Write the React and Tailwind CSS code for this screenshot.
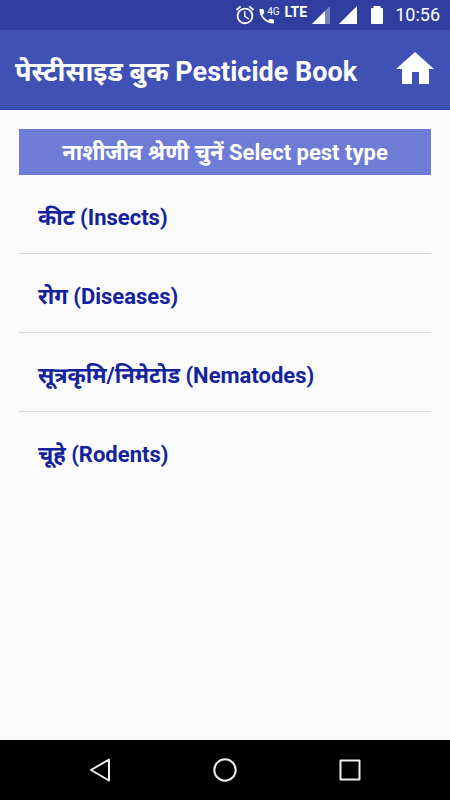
import React from "react";

const pests = [
  { id: "insects", label: "कीट (Insects)" },
  { id: "diseases", label: "रोग (Diseases)" },
  { id: "nematodes", label: "सूत्रकृमि/निमेटोड (Nematodes)" },
  { id: "rodents", label: "चूहे (Rodents)" },
];

const AlarmIcon = () => (
  <svg
    className="w-[22px] h-[22px]"
    viewBox="0 0 24 24"
    fill="white"
    aria-hidden="true"
  >
    <path d="M22 5.72l-4.6-3.86-1.29 1.53 4.6 3.86L22 5.72zM7.88 3.39L6.6 1.86 2 5.71l1.29 1.53 4.59-3.85zM12.5 8H11v6l4.75 2.85.75-1.23-4-2.37V8zM12 4c-4.97 0-9 4.03-9 9s4.02 9 9 9a9 9 0 0 0 0-18zm0 16c-3.87 0-7-3.13-7-7s3.13-7 7-7 7 3.13 7 7-3.13 7-7 7z" />
  </svg>
);

const PhoneIcon = () => (
  <svg
    className="w-4 h-4 mt-2"
    viewBox="0 0 16 16"
    fill="white"
    aria-hidden="true"
  >
    <path d="M1.2 1h2.6c.4 0 .7.3.8.7l.7 2.8c.1.3 0 .6-.2.8L3.4 7c1.2 2.3 3.2 4.3 5.6 5.6l1.7-1.7c.2-.2.5-.3.8-.2l2.8.7c.4.1.7.4.7.8v2.6c0 .5-.3.8-.8.8C6.9 15.6 .4 9.1 .4 1.8c0-.5.3-.8.8-.8z" />
  </svg>
);

const SignalIcon = ({ weak }) => (
  <svg className="w-[18px] h-[18px]" viewBox="0 0 18 18" aria-hidden="true">
    <path d="M0 18L18 0v18z" fill="white" fillOpacity={weak ? 0.35 : 1} />
    {weak ? <path d="M0 18L13 5v13z" fill="white" /> : ""}
  </svg>
);

const BatteryIcon = () => (
  <svg className="w-3 h-[18px]" viewBox="0 0 12 18" aria-hidden="true">
    <path
      d="M2.5 0h7v2H11a1 1 0 0 1 1 1v14a1 1 0 0 1-1 1H1a1 1 0 0 1-1-1V3a1 1 0 0 1 1-1h1.5z"
      fill="white"
    />
  </svg>
);

const StatusBar = () => (
  <div className="h-[30px] shrink-0 bg-[#303f9f] text-white flex items-center justify-end pr-[10px]">
    <AlarmIcon />
    <div className="flex h-full items-start ml-[3px]">
      <PhoneIcon />
      <span className="-ml-2 mt-1 text-[10px] leading-4">4G</span>
    </div>
    <span className="self-start ml-[5px] mt-1 text-sm leading-4 font-bold">
      LTE
    </span>
    <div className="flex items-center gap-[9px] ml-[5px]">
      <SignalIcon weak />
      <SignalIcon />
    </div>
    <div className="ml-[14px]">
      <BatteryIcon />
    </div>
    <span className="ml-3 text-lg leading-5">10:56</span>
  </div>
);

const Header = () => (
  <header className="h-20 shrink-0 bg-[#3f51b5] border-b border-[#2a3eb0] flex items-center justify-between pl-[15px] pr-4">
    <h1 className="text-[27px] leading-8 font-bold text-white whitespace-nowrap pt-1">
      पेस्टीसाइड बुक Pesticide Book
    </h1>
    <button type="button" aria-label="Home" className="pb-1">
      <svg className="w-[38px] h-8" viewBox="0 0 38 32" aria-hidden="true">
        <path d="M19 0L38 17h-5v15H23V20h-7v12H6V17H0z" fill="white" />
      </svg>
    </button>
  </header>
);

const PestList = () => (
  <ul>
    {pests.map(({ id, label }) => (
      <li key={id} className="border-b border-[#d6d6d6] last:border-b-0">
        <button
          type="button"
          className="w-full h-[78px] pl-[19px] pt-2 text-left text-[22px] leading-7 font-bold text-[#14239c]"
        >
          {label}
        </button>
      </li>
    ))}
  </ul>
);

const NavBar = () => (
  <nav className="h-[60px] shrink-0 bg-black flex items-center justify-between px-[88px]">
    <button type="button" aria-label="Back">
      <svg
        className="w-6 h-6"
        viewBox="0 0 24 24"
        fill="none"
        stroke="#eeeeee"
        strokeWidth="2"
        strokeLinejoin="round"
        aria-hidden="true"
      >
        <path d="M21 1.5v21L3 12z" />
      </svg>
    </button>
    <button type="button" aria-label="Home screen">
      <svg
        className="w-6 h-6"
        viewBox="0 0 24 24"
        fill="none"
        stroke="#eeeeee"
        strokeWidth="2"
        aria-hidden="true"
      >
        <circle cx="12" cy="12" r="10.7" />
      </svg>
    </button>
    <button type="button" aria-label="Recent apps">
      <svg
        className="w-6 h-6"
        viewBox="0 0 24 24"
        fill="none"
        stroke="#eeeeee"
        strokeWidth="2"
        strokeLinejoin="round"
        aria-hidden="true"
      >
        <rect x="2.5" y="2.5" width="19" height="19" />
      </svg>
    </button>
  </nav>
);

const App = () => {
  return (
    <div className="min-h-screen flex flex-col bg-[#fafafa] font-['Roboto','Noto_Sans',sans-serif]">
      <StatusBar />
      <Header />
      <main className="grow px-[19px] pt-[19px]">
        <h2 className="bg-[#6f7cd5] text-white text-center text-[22px] leading-7 font-bold pt-[10px] pb-2 whitespace-nowrap">
          नाशीजीव श्रेणी चुनें Select pest type
        </h2>
        <PestList />
      </main>
      <NavBar />
    </div>
  );
};

export default App;
